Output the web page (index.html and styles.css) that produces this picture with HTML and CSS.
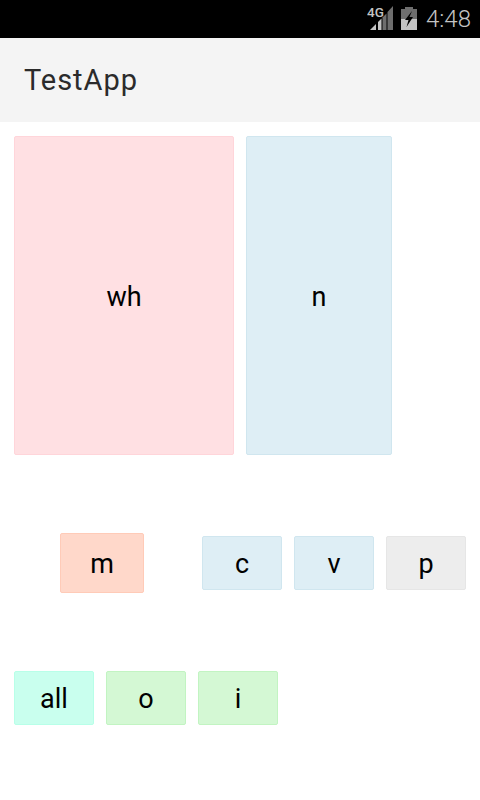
FILE: index.html
```html
<!DOCTYPE html>
<html lang="en">
<head>
    <meta charset="UTF-8">
    <meta name="viewport" content="width=device-width, initial-scale=1.0">
    <title>TestApp</title>
    <link rel="stylesheet" href="styles.css">
</head>
<body>

    <!-- Status bar -->
    <div class="status-bar">
        <svg class="signal" width="26" height="26" viewBox="0 -2 26 26">
            <text x="0" y="11" class="net-label">4G</text>
            <polygon points="3,24 9,18 9,24" fill="#c4c4c4"/>
            <polygon points="11,24 11,16 14.5,12.5 14.5,24" fill="#c4c4c4"/>
            <polygon points="15.5,24 15.5,11.5 19.5,7.5 19.5,24" fill="#6e6e6e"/>
            <polygon points="20.5,24 20.5,6 26,0 26,24" fill="#6e6e6e"/>
        </svg>
        <svg class="battery" width="16" height="23" viewBox="0 0 16 23">
            <rect x="4" y="0" width="8" height="2" fill="#6e6e6e"/>
            <rect x="0" y="2" width="16" height="10" fill="#6e6e6e"/>
            <rect x="0" y="12" width="16" height="11" fill="#c4c4c4"/>
            <polygon points="11,4 4,13 7.5,13 5.5,20 12,10 8.5,10" fill="#000000"/>
        </svg>
        <span class="clock">4:48</span>
    </div>

    <!-- App bar -->
    <div class="app-bar">TestApp</div>

    <!-- Tiles -->
    <div class="content">
        <div class="row row-top">
            <div class="tile tile-pink tile-wh">wh</div>
            <div class="tile tile-blue tile-n">n</div>
        </div>
        <div class="row row-mid">
            <div class="tile tile-orange tile-m">m</div>
            <div class="tile tile-blue">c</div>
            <div class="tile tile-blue">v</div>
            <div class="tile tile-grey">p</div>
        </div>
        <div class="row row-bottom">
            <div class="tile tile-cyan">all</div>
            <div class="tile tile-green">o</div>
            <div class="tile tile-green">i</div>
        </div>
    </div>

</body>
</html>
```

FILE: styles.css
```css
/* Reset and base styles */
* {
    box-sizing: border-box;
    margin: 0;
    padding: 0;
}
body {
    font-family: Roboto, sans-serif;
    background-color: #ffffff;
    color: #000000;
    width: 480px;
    height: 800px;
    overflow: hidden;
}
/* Status bar */
.status-bar {
    height: 38px;
    background-color: #000000;
    display: flex;
    align-items: center;
    justify-content: flex-end;
    padding-right: 9px;
}
.signal {
    margin-right: 8px;
    margin-bottom: 4px;
}
.net-label {
    font-family: Roboto, sans-serif;
    font-size: 13.5px;
    font-weight: 500;
    fill: #c4c4c4;
}
.battery {
    margin-right: 9px;
    margin-bottom: 1px;
}
.clock {
    font-size: 24px;
    font-weight: 300;
    color: #c4c4c4;
}
/* App bar */
.app-bar {
    height: 84px;
    background-color: #f4f4f4;
    display: flex;
    align-items: center;
    padding-left: 24px;
    font-size: 29px;
    letter-spacing: 0.95px;
    color: #2b2b2b;
}
/* Tile rows */
.content {
    padding: 14px 14px 0;
}
.row {
    display: flex;
    gap: 12px;
}
.row-mid {
    align-items: center;
    margin-top: 78px;
    height: 60px;
    padding-left: 46px;
}
.row-bottom {
    margin-top: 78px;
}
/* Tiles */
.tile {
    width: 80px;
    height: 54px;
    display: flex;
    align-items: center;
    justify-content: center;
    border: 1px solid;
    border-radius: 2px;
    padding-top: 2px;
    font-size: 27px;
}
.tile-wh {
    width: 220px;
    height: 319px;
}
.tile-n {
    width: 146px;
    height: 319px;
}
.tile-m {
    width: 84px;
    height: 60px;
    margin-right: 46px;
}
.tile-pink {
    background-color: #ffe0e3;
    border-color: #ffd5da;
}
.tile-blue {
    background-color: #deeef5;
    border-color: #d0e6ef;
}
.tile-orange {
    background-color: #ffd8ca;
    border-color: #ffcbb8;
}
.tile-grey {
    background-color: #ededed;
    border-color: #e6e6e6;
}
.tile-cyan {
    background-color: #c9ffee;
    border-color: #b8ffe8;
}
.tile-green {
    background-color: #d4f8d4;
    border-color: #c2f4c2;
}
```
